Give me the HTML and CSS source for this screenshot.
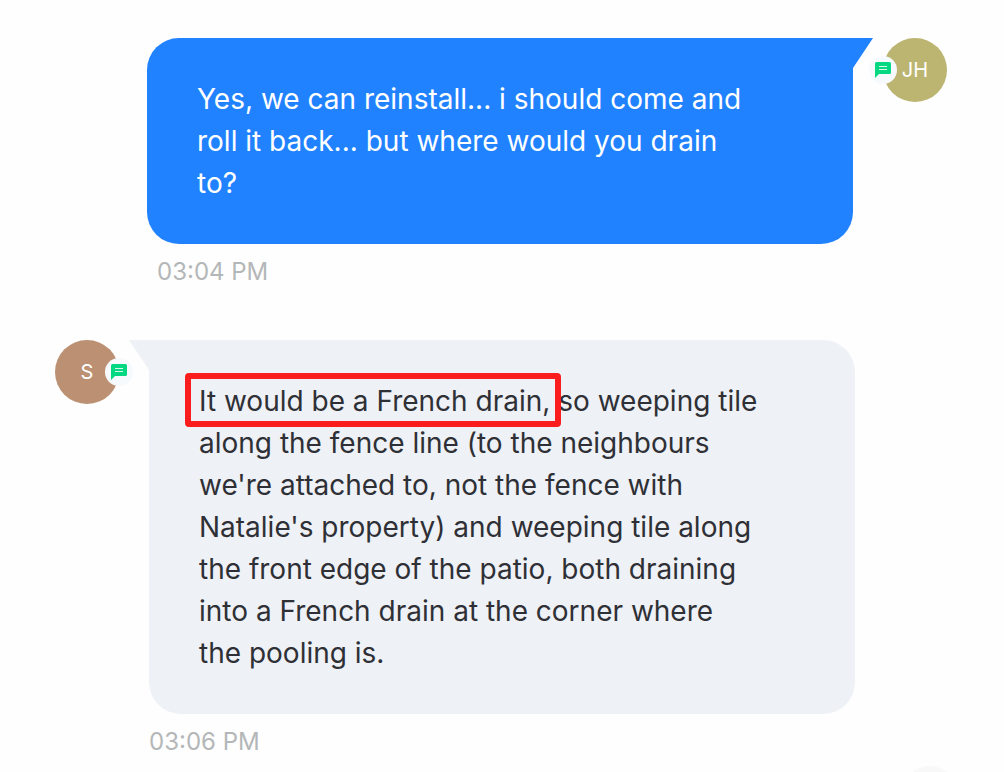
FILE: index.html
```
<!DOCTYPE html>
<html lang="en">
<head>
    <meta charset="utf-8">
    <title>Messages</title>
    <meta name="viewport" content="width=device-width, initial-scale=1">
    <link rel="stylesheet" href="styles.css">
</head>
<body>
    <main class="chat">
        <div class="message sent">
            <div class="content">
                <p class="bubble">Yes, we can reinstall... i should come and roll it back... but where would you drain to?</p>
                <time class="time" datetime="15:04">03:04 PM</time>
            </div>
            <div class="avatar">
                JH
                <span class="badge">
                    <svg width="18" height="18" viewBox="0 0 18 18" aria-hidden="true">
                        <path d="M2.5 1h13A1.5 1.5 0 0 1 17 2.500v9a1.500 1.500 0 0 1-1.500 1.500H5L1 17V2.500A1.500 1.500 0 0 1 2.500 1z" fill="#04d883"/>
                        <path d="M5 5.500h8M5 8.500h8" stroke="#d5f8e9" stroke-width="1.200"/>
                    </svg>
                </span>
            </div>
        </div>

        <div class="message received">
            <div class="avatar">
                S
                <span class="badge">
                    <svg width="18" height="18" viewBox="0 0 18 18" aria-hidden="true">
                        <path d="M2.5 1h13A1.5 1.5 0 0 1 17 2.500v9a1.500 1.500 0 0 1-1.500 1.500H5L1 17V2.500A1.500 1.500 0 0 1 2.500 1z" fill="#04d883"/>
                        <path d="M5 5.500h8M5 8.500h8" stroke="#d5f8e9" stroke-width="1.200"/>
                    </svg>
                </span>
            </div>
            <div class="content">
                <p class="bubble"><mark class="highlight">It would be a French drain,</mark> so weeping tile along the fence line (to the neighbours we're attached to, not the fence with Natalie's property) and weeping tile along the front edge of the patio, both draining into a French drain at the corner where the pooling is.</p>
                <time class="time" datetime="15:06">03:06 PM</time>
            </div>
        </div>
    </main>

    <button type="button" class="scroll-down" aria-label="Scroll down"></button>
</body>
</html>
```
FILE: styles.css
```
* {
    box-sizing: border-box;
}
body {
    margin: 0;
    background-color: #fefefe;
    font-family: Inter, sans-serif;
}
.chat {
    display: flex;
    flex-direction: column;
    gap: 50px;
    padding: 38px 57px 0 55px;
}
.message {
    display: flex;
    gap: 30px;
}
.sent {
    padding-left: 92px;
}
.received {
    padding-right: 92px;
}
.content {
    flex: 1;
}
.bubble {
    position: relative;
    margin: 0 0 10px;
    padding: 40px 96px 40px 50px;
    font-size: 28px;
    line-height: 42px;
}
.bubble::before {
    content: "";
    position: absolute;
    top: 0;
    width: 20px;
    height: 30px;
}
.sent .bubble {
    border-radius: 32px 0 32px 32px;
    background-color: #2082ff;
    color: #fff;
}
.sent .bubble::before {
    left: 100%;
    background-color: #2082ff;
    clip-path: polygon(0 0, 100% 0, 0 100%);
}
.received .bubble {
    border-radius: 0 32px 32px 32px;
    background-color: #eef1f6;
    color: #2e3035;
}
.received .bubble::before {
    right: 100%;
    background-color: #eef1f6;
    clip-path: polygon(0 0, 100% 0, 100% 100%);
}
.time {
    display: block;
    color: #b4b7b8;
    font-size: 24px;
    line-height: 36px;
}
.sent .time {
    padding-left: 10px;
}
.avatar {
    position: relative;
    display: flex;
    align-items: center;
    justify-content: center;
    width: 64px;
    height: 64px;
    border-radius: 50%;
    color: #fff;
    font-size: 20px;
}
.sent .avatar {
    background-color: #bcb571;
}
.received .avatar {
    background-color: #bc9173;
}
.badge {
    position: absolute;
    top: 18px;
    display: flex;
    align-items: center;
    justify-content: center;
    width: 28px;
    height: 28px;
    border-radius: 50%;
    background-color: #f7fafd;
}
.sent .badge {
    left: -14px;
}
.received .badge {
    right: -14px;
}
.highlight {
    position: relative;
    background: none;
    color: inherit;
}
.highlight::after {
    content: "";
    position: absolute;
    inset: -11px -11px -9px -14px;
    border: 6px solid #fb1d1d;
    border-radius: 4px;
}
.scroll-down {
    position: fixed;
    right: 46px;
    bottom: -50px;
    width: 56px;
    height: 56px;
    border: none;
    border-radius: 50%;
    background-color: #f8f8f8;
    cursor: pointer;
}
```
